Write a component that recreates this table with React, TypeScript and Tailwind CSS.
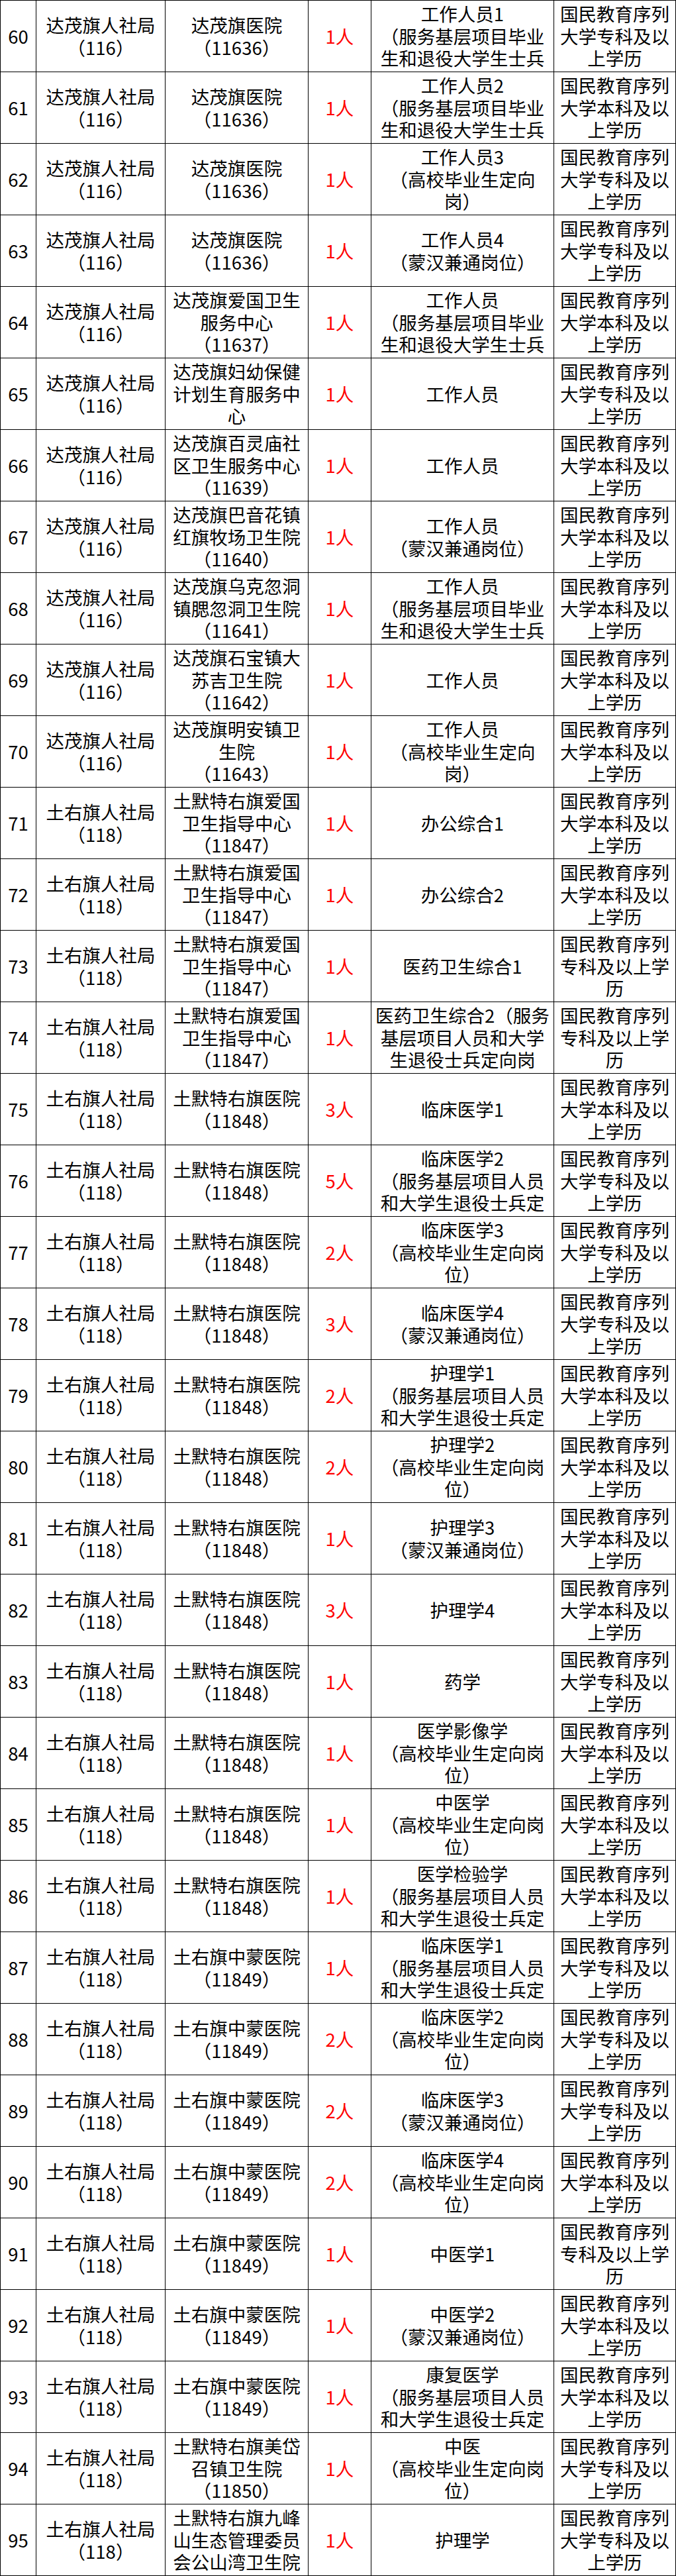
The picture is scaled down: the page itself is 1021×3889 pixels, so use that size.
import React from "react";

type Row = {
  n: number;
  a: string[];
  b: string[];
  c: string;
  d: string[];
  e: string[];
};

const DM = ["达茂旗人社局", "（116）"];
const TY = ["土右旗人社局", "（118）"];
const DMYY = ["达茂旗医院", "（11636）"];
const AIGUO = ["土默特右旗爱国", "卫生指导中心", "（11847）"];
const TMYY = ["土默特右旗医院", "（11848）"];
const ZMYY = ["土右旗中蒙医院", "（11849）"];

const ZK = ["国民教育序列", "大学专科及以", "上学历"];
const BK = ["国民教育序列", "大学本科及以", "上学历"];
const ZK2 = ["国民教育序列", "专科及以上学", "历"];

const FWBY = ["（服务基层项目毕业", "生和退役大学生士兵"];
const FWRY = ["（服务基层项目人员", "和大学生退役士兵定"];
const GXG = ["（高校毕业生定向岗", "位）"];
const GXX = ["（高校毕业生定向", "岗）"];
const MH = ["（蒙汉兼通岗位）"];

const rows: Row[] = [
  { n: 60, a: DM, b: DMYY, c: "1人", d: ["工作人员1", ...FWBY], e: ZK },
  { n: 61, a: DM, b: DMYY, c: "1人", d: ["工作人员2", ...FWBY], e: BK },
  { n: 62, a: DM, b: DMYY, c: "1人", d: ["工作人员3", ...GXX], e: ZK },
  { n: 63, a: DM, b: DMYY, c: "1人", d: ["工作人员4", ...MH], e: ZK },
  { n: 64, a: DM, b: ["达茂旗爱国卫生", "服务中心", "（11637）"], c: "1人", d: ["工作人员", ...FWBY], e: BK },
  { n: 65, a: DM, b: ["达茂旗妇幼保健", "计划生育服务中", "心"], c: "1人", d: ["工作人员"], e: ZK },
  { n: 66, a: DM, b: ["达茂旗百灵庙社", "区卫生服务中心", "（11639）"], c: "1人", d: ["工作人员"], e: BK },
  { n: 67, a: DM, b: ["达茂旗巴音花镇", "红旗牧场卫生院", "（11640）"], c: "1人", d: ["工作人员", ...MH], e: BK },
  { n: 68, a: DM, b: ["达茂旗乌克忽洞", "镇腮忽洞卫生院", "（11641）"], c: "1人", d: ["工作人员", ...FWBY], e: BK },
  { n: 69, a: DM, b: ["达茂旗石宝镇大", "苏吉卫生院", "（11642）"], c: "1人", d: ["工作人员"], e: BK },
  { n: 70, a: DM, b: ["达茂旗明安镇卫", "生院", "（11643）"], c: "1人", d: ["工作人员", ...GXX], e: BK },
  { n: 71, a: TY, b: AIGUO, c: "1人", d: ["办公综合1"], e: BK },
  { n: 72, a: TY, b: AIGUO, c: "1人", d: ["办公综合2"], e: BK },
  { n: 73, a: TY, b: AIGUO, c: "1人", d: ["医药卫生综合1"], e: ZK2 },
  { n: 74, a: TY, b: AIGUO, c: "1人", d: ["医药卫生综合2（服务", "基层项目人员和大学", "生退役士兵定向岗"], e: ZK2 },
  { n: 75, a: TY, b: TMYY, c: "3人", d: ["临床医学1"], e: BK },
  { n: 76, a: TY, b: TMYY, c: "5人", d: ["临床医学2", ...FWRY], e: ZK },
  { n: 77, a: TY, b: TMYY, c: "2人", d: ["临床医学3", ...GXG], e: ZK },
  { n: 78, a: TY, b: TMYY, c: "3人", d: ["临床医学4", ...MH], e: ZK },
  { n: 79, a: TY, b: TMYY, c: "2人", d: ["护理学1", ...FWRY], e: BK },
  { n: 80, a: TY, b: TMYY, c: "2人", d: ["护理学2", ...GXG], e: BK },
  { n: 81, a: TY, b: TMYY, c: "1人", d: ["护理学3", ...MH], e: BK },
  { n: 82, a: TY, b: TMYY, c: "3人", d: ["护理学4"], e: BK },
  { n: 83, a: TY, b: TMYY, c: "1人", d: ["药学"], e: ZK },
  { n: 84, a: TY, b: TMYY, c: "1人", d: ["医学影像学", ...GXG], e: BK },
  { n: 85, a: TY, b: TMYY, c: "1人", d: ["中医学", ...GXG], e: BK },
  { n: 86, a: TY, b: TMYY, c: "1人", d: ["医学检验学", ...FWRY], e: BK },
  { n: 87, a: TY, b: ZMYY, c: "1人", d: ["临床医学1", ...FWRY], e: ZK },
  { n: 88, a: TY, b: ZMYY, c: "2人", d: ["临床医学2", ...GXG], e: ZK },
  { n: 89, a: TY, b: ZMYY, c: "2人", d: ["临床医学3", ...MH], e: ZK },
  { n: 90, a: TY, b: ZMYY, c: "2人", d: ["临床医学4", ...GXG], e: BK },
  { n: 91, a: TY, b: ZMYY, c: "1人", d: ["中医学1"], e: ZK2 },
  { n: 92, a: TY, b: ZMYY, c: "1人", d: ["中医学2", ...MH], e: BK },
  { n: 93, a: TY, b: ZMYY, c: "1人", d: ["康复医学", ...FWRY], e: BK },
  { n: 94, a: TY, b: ["土默特右旗美岱", "召镇卫生院", "（11850）"], c: "1人", d: ["中医", ...GXG], e: ZK },
  { n: 95, a: TY, b: ["土默特右旗九峰", "山生态管理委员", "会公山湾卫生院"], c: "1人", d: ["护理学"], e: ZK },
];

function Cell({ lines, red }: { lines: string[]; red?: boolean }) {
  return (
    <div className="flex flex-col overflow-hidden border-r border-b border-black">
      <div className={`my-auto whitespace-nowrap text-center ${red ? "text-[#ff0000]" : "text-black"}`}>
        {lines.map((l, i) => (
          <div key={i}>{l}</div>
        ))}
      </div>
    </div>
  );
}

export default function App() {
  return (
    <div
      className="w-[1021px] bg-white text-[27.5px] leading-[33.5px] font-normal"
      style={{ fontFamily: '"Noto Sans CJK SC", "Noto Sans", sans-serif' }}
    >
      <div className="grid grid-cols-[54px_195px_216px_95px_276px_184px] auto-rows-[108px] border-l border-t border-black">
        {rows.map((r) => (
          <React.Fragment key={r.n}>
            <Cell lines={[String(r.n)]} />
            <Cell lines={r.a} />
            <Cell lines={r.b} />
            <Cell lines={[r.c]} red />
            <Cell lines={r.d} />
            <Cell lines={r.e} />
          </React.Fragment>
        ))}
      </div>
    </div>
  );
}
